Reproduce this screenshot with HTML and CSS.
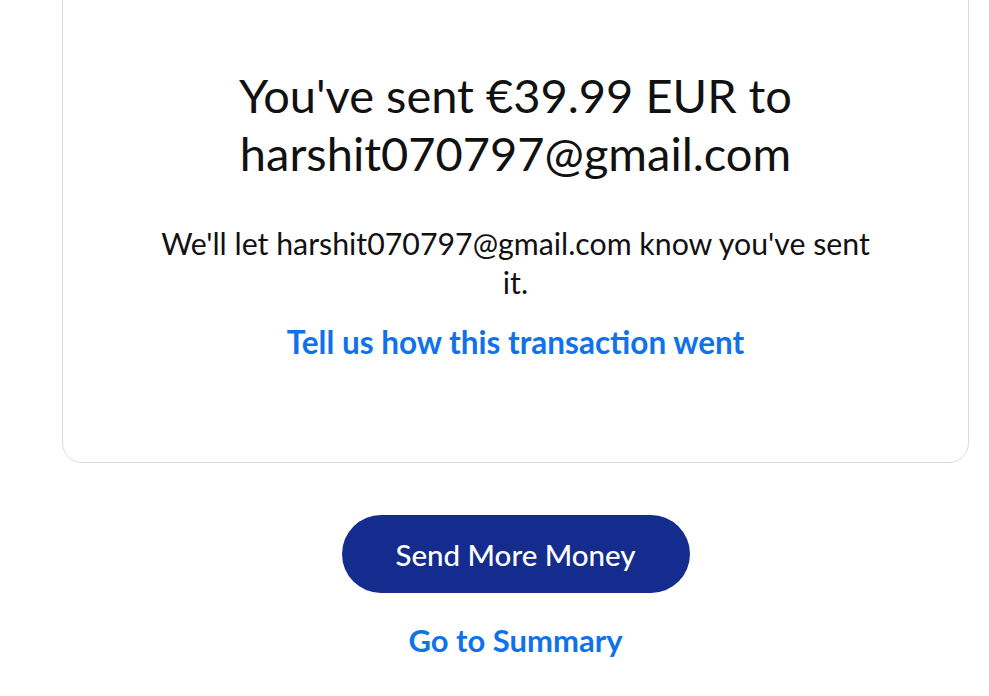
FILE: index.html
```html
<!DOCTYPE html>
<html lang="en">
<head>
    <meta charset="UTF-8">
    <meta name="viewport" content="width=device-width, initial-scale=1.0">
    <title>Payment sent</title>
    <link rel="stylesheet" href="styles.css">
</head>
<body>
    <div class="page">
        <div class="card">
            <h1>You've sent €39.99 EUR to harshit070797@gmail.com</h1>
            <p class="note">We'll let harshit070797@gmail.com know you've sent it.</p>
            <a class="link feedback" href="#">Tell us how this transaction went</a>
        </div>
        <div class="actions">
            <button class="primary">Send More Money</button>
            <a class="link summary" href="#">Go to Summary</a>
        </div>
    </div>
</body>
</html>
```

FILE: styles.css
```css
body {
    margin: 0;
    font-family: Lato, "Open Sans", sans-serif;
    color: #111;
    background: #fff;
    overflow: hidden;
}
.page {
    width: 907px;
    margin-left: 62px;
}
.card {
    margin-top: -40px;
    padding: 105px 60px 100px;
    border: 1px solid #dcdbd5;
    border-radius: 20px;
    display: flex;
    flex-direction: column;
    align-items: center;
    text-align: center;
}
h1 {
    margin: 0;
    max-width: 640px;
    font-size: 47px;
    font-weight: 400;
    line-height: 58px;
}
.note {
    margin: 42px 0 0;
    max-width: 730px;
    font-size: 30.3px;
    line-height: 39px;
}
.link {
    color: #1072eb;
    font-weight: 700;
    text-decoration: none;
}
.feedback {
    margin-top: 20px;
    font-size: 31.5px;
    line-height: 40px;
}
.actions {
    display: flex;
    flex-direction: column;
    align-items: center;
    padding-top: 52px;
}
.primary {
    width: 348px;
    height: 78px;
    border: none;
    border-radius: 39px;
    background: #142c8e;
    color: #fff;
    font-family: inherit;
    font-size: 29.5px;
    font-weight: 500;
    cursor: pointer;
}
.summary {
    margin-top: 27px;
    font-size: 31px;
    line-height: 40px;
}
```
